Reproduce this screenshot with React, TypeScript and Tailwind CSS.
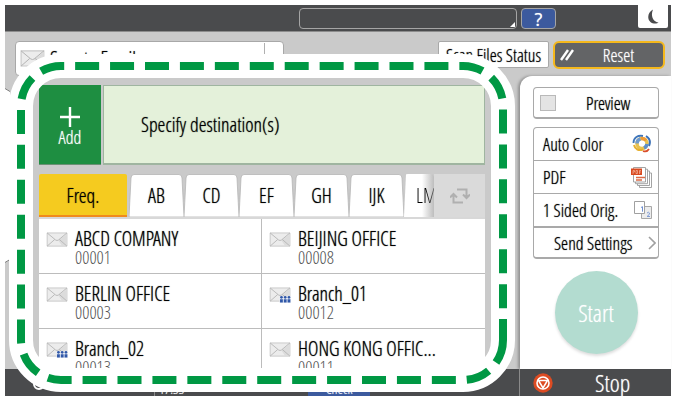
import type { ReactNode } from "react";

const tabs = ["AB", "CD", "EF", "GH", "IJK"];

const contacts = [
  { name: "ABCD COMPANY", code: "00001", group: false },
  { name: "BEIJING OFFICE", code: "00008", group: false },
  { name: "BERLIN OFFICE", code: "00003", group: false },
  { name: "Branch_01", code: "00012", group: true },
  { name: "Branch_02", code: "00013", group: true },
  { name: "HONG KONG OFFIC...", code: "00011", group: false },
];

function MailIcon({ group = false, className = "h-4 w-6" }: { group?: boolean; className?: string }) {
  return (
    <svg viewBox="0 0 24 17" className={className} aria-hidden="true">
      <path d="M1 1h21v14H1z" fill="#ececec" stroke="#c8c8c8" />
      <path d="M13 9 22 2v13h-5z" fill="#dcdcdc" />
      <path d="M1 1l9 7.500q1.500 1 3 0L22 1M1 15l8-7M22 15l-8-7" fill="none" stroke="#b2b2b2" strokeWidth="0.900" />
      {group && (
        <g fill="#2f57a8">
          <path d="M11 10h12v7H11z" fill="#e9edf5" />
          <circle cx="13" cy="11" r="1.400" />
          <circle cx="17" cy="11" r="1.400" />
          <circle cx="21" cy="11" r="1.400" />
          <path d="M11.500 13h3v3.500h-3zM15.500 13h3v3.500h-3zM19.500 13h3v3.500h-3z" />
        </g>
      )}
    </svg>
  );
}

function ColorIcon() {
  return (
    <svg viewBox="0 0 20 20" className="size-5" fill="none" aria-hidden="true">
      <circle cx="10" cy="9.500" r="5" stroke="#e8c250" strokeWidth="3.500" />
      <path d="M5 9.500a5 5 0 0 1 3.500-4.700" stroke="#6f9bd0" strokeWidth="3.500" />
      <path d="M1.500 9C1.500 3.500 6 1 11 2" stroke="#3f76bb" strokeWidth="1.800" />
      <path d="M9 4.500a5 5 0 0 1 5 2" stroke="#f09a35" strokeWidth="3.500" />
      <path d="M14 2c4 2.500 4.500 6.500 3 10" stroke="#3a6fb5" strokeWidth="2" />
      <path d="M15 10a5 5 0 0 1-3 4" stroke="#5f90ca" strokeWidth="3.500" />
      <path d="M2 11c1 4.500 5 6 9 4.500" stroke="#e6b030" strokeWidth="2" />
      <path d="M11 17c2.500 1 4.500.3 6-2" stroke="#d94f2b" strokeWidth="1.800" />
    </svg>
  );
}

function PdfIcon() {
  return (
    <svg viewBox="0 0 21 21" className="size-[21px]" aria-hidden="true">
      <g fill="#fff" stroke="#9a9a9a" strokeWidth="0.900">
        <path d="M8.500 6h12v14.500h-12z" />
        <path d="M6.500 4h12v14.500h-12z" />
        <path d="M4.500 2.200h12v14.500h-12z" />
        <path d="M2.500.5h12V15h-12z" />
      </g>
      <path d="M0 1.500h11V8H0z" fill="#d9491f" />
      <path d="M2 7V3.500h1.500V5H2M5 3.500v3h1.500v-3zM8.500 7V3.500H10M8.500 5H10" fill="none" stroke="#f3b8a2" strokeWidth="0.700" />
      <path d="M5 10.500h9M5 13h6" stroke="#dc6a45" strokeWidth="1.500" />
    </svg>
  );
}

function SidedIcon() {
  return (
    <svg viewBox="0 0 18 18" className="size-[18px]" aria-hidden="true">
      <path d="M7.500 5.500h10v12h-10z" fill="#ececec" stroke="#a8a8a8" />
      <path d="M.5.5h10v12H.5z" fill="#fff" stroke="#a0a0a0" />
      <path d="M7 6.500l1.500-.8v5" fill="none" stroke="#6f8fd0" />
      <path d="M13 12q2-1.500 2.500 0t-2.500 3.500h3" fill="none" stroke="#7f9cd6" />
    </svg>
  );
}

function StopIcon() {
  return (
    <svg viewBox="0 0 20 20" className="size-5" aria-hidden="true">
      <circle cx="10" cy="10" r="9.700" fill="#dc4b22" />
      <circle cx="10" cy="10" r="6" fill="none" stroke="#fff" strokeWidth="1.600" />
      <path d="M5.500 7.500h9L10 15z" fill="#dc4b22" stroke="#fff" strokeWidth="1.500" />
    </svg>
  );
}

function Tab({ children }: { children: ReactNode }) {
  return (
    <button className="relative w-[55px] shrink-0">
      <svg viewBox="0 0 55 43" preserveAspectRatio="none" className="absolute inset-0 h-full w-full" aria-hidden="true">
        <path d="M0 43 2 4Q2.200.5 5 .5H50Q52.800.5 53 4L55 43z" fill="#fff" stroke="#b5b5b5" strokeWidth="0.800" />
      </svg>
      <span className="relative">{children}</span>
    </button>
  );
}

// Dashed frame laid over the destination area
function Highlight() {
  const frame = "M494 286a40 40 0 0 1-40 40H52a40 40 0 0 1-40-40V52a40 40 0 0 1 40-40H454a40 40 0 0 1 40 40z";

  return (
    <svg
      viewBox="0 0 506 338"
      className="pointer-events-none absolute top-[49px] left-1 h-[338px] w-[506px]"
      fill="none"
      aria-hidden="true"
    >
      <path d={frame} stroke="#fff" strokeWidth="24" />
      <path d={frame} stroke="#009844" strokeWidth="8" strokeDasharray="24 10.930" />
    </svg>
  );
}

function SettingRow({ label, icon }: { label: string; icon: ReactNode }) {
  return (
    <button className="flex h-[33px] items-center justify-between border-b border-[#a9a9a9] pr-[6px] pl-[9px]">
      {label}
      {icon}
    </button>
  );
}

export default function App() {
  return (
    <div className="h-screen bg-white p-[5px] pb-1 font-['Open_Sans_Condensed_Light','Open_Sans_Condensed','Roboto_Condensed',sans-serif] text-[18px] leading-6 text-black [text-shadow:0_0_1px_color-mix(in_srgb,currentColor_75%,transparent)] [&_button]:[text-shadow:inherit]">
      <div className="relative flex h-full flex-col bg-[#cacaca]">
        <header className="flex h-[27px] shrink-0 items-start justify-end border-b border-[#8d8d8d] bg-[#4a4b4d]">
          <button aria-label="Messages" className="mt-[3px] mr-1 flex h-[21px] w-[218px] items-end justify-end rounded-sm border border-[#a5a5a5] p-px">
            <svg viewBox="0 0 5 5" className="size-[5px]" aria-hidden="true">
              <path d="M5 0v5H0z" fill="#fff" />
            </svg>
          </button>
          <button className="mt-[3px] mr-[82px] flex h-[21px] w-[35px] items-center justify-center rounded-sm border border-[#a5a5a5] bg-[#3c5a9e] font-['Open_Sans'] text-[18px] text-white">
            ?
          </button>
          <button aria-label="Sleep" className="mr-[3px] flex h-[23px] w-[30px] items-center justify-center rounded-b-xs bg-white">
            <svg viewBox="0 0 11 15" className="h-[15px] w-[11px]" aria-hidden="true">
              <path d="M5 .5C-1.500 4-1.500 13 6 14.500c2 .3 3.500-.2 4.500-1C4.500 13 2.500 6 5 .5z" fill="#4a4b4d" />
            </svg>
          </button>
        </header>

        <div className="flex h-11 shrink-0 items-start pt-[9px] pr-[6px] pl-[10px]">
          <button className="flex h-[35px] w-[269px] items-center rounded-sm border border-[#a8a8a8] bg-white pl-1 text-[20px]">
            <MailIcon className="h-5 w-[26px]" />
            <span className="ml-1 grow text-left">Scan to Email</span>
            <span className="mr-[18px] h-8 border-l border-[#b0b0b0]" />
          </button>
          <button className="ml-auto h-[27px] w-[111px] rounded-xs border border-[#a8a8a8] bg-white">
            Scan Files Status
          </button>
          <button className="ml-1 flex h-7 w-[112px] items-center rounded-md border-2 border-[#f5b81c] bg-[#636466] pl-1 text-white">
            <svg viewBox="0 0 14 12" className="ml-px h-3 w-[14px]" stroke="#fff" strokeWidth="2.400" aria-hidden="true">
              <path d="M1 11 8 1M6 11l7-10" />
            </svg>
            <span className="grow">Reset</span>
          </button>
        </div>

        <div className="flex min-h-0 flex-1">
          <main className="relative flex min-w-0 flex-1 flex-col pt-[9px] pr-[35px] pl-[34px]">
            <section className="flex h-20 shrink-0 gap-[2px]">
              <button className="flex w-[62px] flex-col items-center border-b border-[#6b8f74] bg-[#1e8e41] pt-[22px] text-white">
                <svg viewBox="0 0 20 20" className="size-5" stroke="#fff" strokeWidth="2.400" aria-hidden="true">
                  <path d="M10 0v20M0 10h20" />
                </svg>
                <span className="leading-5">Add</span>
              </button>
              <button className="grow border border-b-2 border-[#9fb5a0] bg-[#e4f1da] pl-[37px] text-left text-[20px]">
                Specify destination(s)
              </button>
            </section>

            <nav className="mt-[9px] flex h-[43px] shrink-0 text-[20px]">
              <button className="mr-[2px] w-[88px] shrink-0 rounded-t-xs border-b-2 border-[#f08a1d] bg-[#f5cb1f] pt-[2px]">
                Freq.
              </button>
              {tabs.map((tab) => (
                <Tab key={tab}>{tab}</Tab>
              ))}
              <button className="min-w-0 grow overflow-hidden rounded-t-sm bg-linear-to-r from-white from-60% to-[#bdbdbd] pl-3 text-left [clip-path:polygon(2px_0,100%_0,100%_100%,0_100%)]">
                <span className="bg-linear-to-r from-black from-40% to-[#999999] bg-clip-text text-transparent">LM</span>
              </button>
              <button aria-label="Switch tabs" className="flex w-[51px] shrink-0 items-center justify-center bg-[#dadada]">
                <svg viewBox="0 0 20 16" className="h-4 w-5" fill="none" stroke="#b0b0b0" strokeWidth="2" aria-hidden="true">
                  <path d="M7 1.500h9.500V9M13 6.500l3.500 3.500L20 6.500M13 14.500H3.500V7M0 9.500 3.500 6 7 9.500" />
                </svg>
              </button>
            </nav>

            <ul className="grid min-h-0 flex-1 grid-cols-2 content-start overflow-hidden border-t-2 border-[#d8d8d8] bg-white">
              {contacts.map((c) => (
                <li key={c.code} className="h-[55px] border-b border-[#bcbcbc] odd:border-r">
                  <button className="flex h-full w-full pt-[10px] pl-[7px] text-left">
                    <MailIcon group={c.group} className="mt-[3px] h-4 w-[23px]" />
                    <span className="ml-[6px] flex flex-col">
                      <span className="text-[20px] leading-5">{c.name}</span>
                      <span className="text-[18px] leading-4 text-[#555555] [text-shadow:none]">{c.code}</span>
                    </span>
                  </button>
                </li>
              ))}
            </ul>
          </main>

          <aside className="flex w-[151px] shrink-0 flex-col rounded-tl-xl bg-white pt-[11px] pr-3 pl-[13px] shadow-[-2px_0_3px_#909090]">
            <label className="flex h-8 items-center rounded-sm border border-b-2 border-[#a9a9a9] pl-[6px]">
              <input type="checkbox" className="size-4 appearance-none border border-[#b9b9b9] bg-[#e4e4e4]" />
              <span className="ml-[30px]">Preview</span>
            </label>
            <div className="mt-[8px] flex flex-col rounded-sm border border-b-2 border-[#a9a9a9]">
              <SettingRow label="Auto Color" icon={<ColorIcon />} />
              <SettingRow label="PDF" icon={<PdfIcon />} />
              <SettingRow label="1 Sided Orig." icon={<SidedIcon />} />
              <button className="flex h-[30px] items-center justify-between border-t border-[#a9a9a9] pr-[2px] pl-[20px]">
                Send Settings
                <svg viewBox="0 0 8 14" className="h-[14px] w-2" fill="none" stroke="#a0a0a0" strokeWidth="1.600" aria-hidden="true">
                  <path d="M1 1l6 6-6 6" />
                </svg>
              </button>
            </div>
            <button className="mt-[12px] size-[83px] self-center rounded-full bg-[#b3dcd0] text-[24px] text-white shadow-[0_2px_3px_#dddddd]">
              Start
            </button>
          </aside>
        </div>

        <footer className="flex h-[27px] shrink-0 bg-[#4a4b4d] text-white">
          <div className="flex min-w-0 flex-1 items-end overflow-hidden border-r border-[#8a8a8a] pl-7 text-sm leading-3">
            <span className="mb-[6px] size-3 shrink-0 rounded-full border-2 border-white" />
            <span className="ml-[109px] h-full shrink-0 border-l border-[#8a8a8a] pt-[14px] pl-1">17:33</span>
            <button className="ml-auto mr-[149px] h-full w-[62px] shrink-0 bg-[#3c5a9e] pt-3">Check</button>
          </div>
          <button className="flex w-[151px] shrink-0 items-center pl-[13px] text-[24px]">
            <StopIcon />
            <span className="ml-[42px]">Stop</span>
          </button>
        </footer>

        <svg
          viewBox="0 0 5 176"
          className="pointer-events-none absolute top-[83px] left-0 h-[176px] w-[5px]"
          aria-hidden="true"
        >
          <path d="M0 0 5 3V172L0 175z" fill="#fff" />
          <path d="M0 .5 5 3.500M0 174.500l5-3" stroke="#777777" />
        </svg>
        <Highlight />
      </div>
    </div>
  );
}
